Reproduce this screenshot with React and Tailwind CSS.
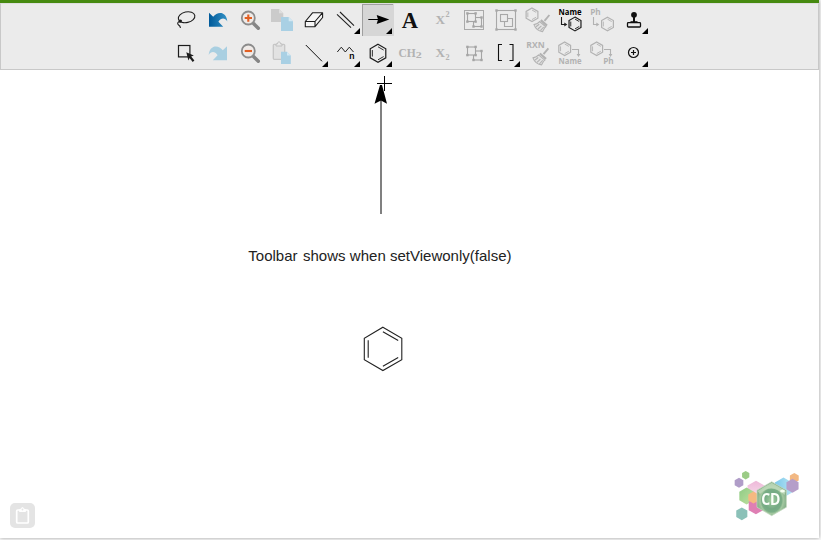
import React from "react";

const SANS = "'Open Sans', 'Noto Sans', sans-serif";
const SERIF = "'Liberation Serif', serif";
const GREY = "#b2b2b2";
const INK = "#1c1c1c";

function hexPoints(cx, cy, r) {
  const w = r * 0.866;
  return [
    [cx, cy - r],
    [cx + w, cy - r / 2],
    [cx + w, cy + r / 2],
    [cx, cy + r],
    [cx - w, cy + r / 2],
    [cx - w, cy - r / 2],
  ]
    .map((p) => p.join(","))
    .join(" ");
}

function Ring({ cx, cy, r, gap = 2, color, sw = 1.2 }) {
  const i = r - gap;
  const w = i * 0.866;
  return (
    <g fill="none" stroke={color} strokeWidth={sw}>
      <polygon points={hexPoints(cx, cy, r)} />
      <path
        d={`M${cx} ${cy - i}L${cx + w} ${cy - i / 2}M${cx} ${cy + i}L${cx + w} ${cy + i / 2}M${cx - w} ${cy - i / 2}V${cy + i / 2}`}
        strokeWidth={sw * 0.75}
      />
    </g>
  );
}

function Corner() {
  return <polygon points="30,24 30,30 24,30" fill="#000" />;
}

function Lens({ minus }) {
  return (
    <g>
      <path d="M19.5 19.5L24.3 24.3" stroke="#858585" strokeWidth="3.4" strokeLinecap="round" />
      <circle cx="14.3" cy="14" r="6.5" fill="#f0ebe8" stroke="#8c8c8c" strokeWidth="1.8" />
      <path d={minus ? "M10.7 14H18" : "M10.7 14H18M14.3 10.4V17.7"} stroke="#e25f22" strokeWidth="2.1" />
    </g>
  );
}

function Broom({ y = 0 }) {
  return (
    <g transform={`translate(0 ${y})`} stroke={GREY} fill="none" strokeWidth="1.1">
      <path d="M27.4 11L22.5 16.8" strokeWidth="1.9" />
      <path d="M18.8 16.2L25 21.6" strokeWidth="2.2" />
      <path d="M17.6 17.6C16 19.5 14.5 20 12 20.6C13.2 24 16.5 27 20.5 27.6C21.6 26 22 24 23.8 22.8Z" fill="#e4e4e4" />
      <path d="M14 22.8L17.2 20.2M16 25L19.4 21.8M18.4 26.7L21.7 23" />
    </g>
  );
}

function Label({ x, y, w, children, color = GREY, size = 8 }) {
  return (
    <text x={x} y={y} fontFamily={SANS} fontWeight="700" fontSize={size} fill={color} textLength={w} lengthAdjust="spacingAndGlyphs">
      {children}
    </text>
  );
}

function Overlap({ y = 0 }) {
  return (
    <g transform={`translate(0 ${y})`} fill="none" stroke="#a5a5a5" strokeWidth="1.1">
      <rect x="15.5" y="13.5" width="8" height="9" />
      <rect x="9.5" y="9.5" width="8" height="8" fill="#ebebeb" />
      <g fill="#a5a5a5" stroke="none">
        <rect x="8.2" y="8.2" width="2.4" height="2.4" />
        <rect x="16.4" y="8.2" width="2.4" height="2.4" />
        <rect x="8.2" y="16.4" width="2.4" height="2.4" />
        <rect x="16.4" y="16.4" width="2.4" height="2.4" />
        <rect x="22.3" y="12.3" width="2.4" height="2.4" />
        <rect x="22.3" y="21.3" width="2.4" height="2.4" />
        <rect x="14.3" y="21.3" width="2.4" height="2.4" />
      </g>
    </g>
  );
}

function Script({ y }) {
  return (
    <g fontFamily={SERIF} fontWeight="700" fill={GREY}>
      <text x="9.5" y="20" fontSize="13.3">X</text>
      <text x="19.5" y={y} fontSize="8.2">2</text>
    </g>
  );
}

function DownArrow({ x, y, color }) {
  return (
    <g>
      <path d={`M${x} ${y}V${y + 7.5}H${x + 3.5}`} fill="none" stroke={color} strokeWidth="1.1" />
      <polygon points={`${x + 2.8},${y + 5.5} ${x + 5.8},${y + 7.5} ${x + 2.8},${y + 9.5}`} fill={color} />
    </g>
  );
}

function TurnArrow({ x, color }) {
  return (
    <g>
      <path d={`M${x} 12.5H${x + 6.5}V18`} fill="none" stroke={color} strokeWidth="1.1" />
      <polygon points={`${x + 4.6},17 ${x + 8.4},17 ${x + 6.5},20`} fill={color} />
    </g>
  );
}

const topRow = [
  {
    name: "Lasso",
    art: (
      <g fill="none" stroke={INK} strokeWidth="1.1">
        <ellipse cx="16.6" cy="13.2" rx="8.4" ry="5.3" transform="rotate(-13 16.6 13.2)" />
        <path d="M11.5 16.3C9 18 8 17.5 7.7 19.2C7.3 21.5 9.8 20.3 10.5 23.8" />
        <circle cx="10.2" cy="17.2" r="1.1" fill={INK} />
      </g>
    ),
  },
  {
    name: "Undo",
    art: (
      <g>
        <defs>
          <linearGradient id="undo">
            <stop offset="0" stopColor="#005a9a" />
            <stop offset="1" stopColor="#3392c6" />
          </linearGradient>
        </defs>
        <path d="M7 8.7L11.2 12.8C15.5 6.8 24.5 7.2 25.3 17.4C22.8 13.4 19 13.6 16.4 17.8L21.2 22.7H7Z" fill="url(#undo)" />
      </g>
    ),
  },
  { name: "Zoom in", art: <Lens /> },
  {
    name: "Copy",
    art: (
      <g>
        <path d="M5 5H13L17.3 9.3V18H5Z" fill="#cbcbcb" />
        <path d="M13 5V9.3H17.3Z" fill="#dedede" />
        <path d="M15 13H22.7L27 17.3V27H15Z" fill="#a9d0e4" />
        <path d="M22.7 13V17.3H27Z" fill="#d2e8f3" />
      </g>
    ),
  },
  {
    name: "Eraser",
    art: <path d="M7.3 17.5L14.7 8.7H24.6V13.5L17 22.7H7.3ZM7.3 17.5H17V22.7M17 17.5L24.6 8.7" fill="#f6f6f6" stroke={INK} strokeWidth="1.1" strokeLinejoin="round" />,
  },
  { name: "Double bond", menu: true, art: <path d="M7 10.3L21 23.7M10 8L24 21.7" stroke="#222" strokeWidth="1.1" /> },
  {
    name: "Arrow",
    menu: true,
    active: true,
    art: (
      <g>
        <path d="M6.3 15.5H17" stroke="#000" strokeWidth="1" />
        <path d="M14.7 10.9L27.3 15.5L14.7 20.1L16 15.5Z" fill="#000" />
      </g>
    ),
  },
  { name: "Text", art: <text x="7.7" y="23.8" fontFamily={SERIF} fontWeight="700" fontSize="22.5" fill="#111">A</text> },
  { name: "Superscript", art: <Script y="13" /> },
  {
    name: "Group",
    art: (
      <g>
        <rect x="6.5" y="6.5" width="19" height="19" fill="none" stroke="#aaa" />
        <Overlap />
      </g>
    ),
  },
  {
    name: "Frame",
    art: (
      <g fill="none" stroke="#a8a8a8" strokeWidth="1.1">
        <rect x="6.5" y="6.5" width="19" height="19" />
        <path d="M14.5 14.5H22.5V22.5H14.5Z" />
        <rect x="10.5" y="10.5" width="7" height="7" fill="#ebebeb" />
        <g fill="#a8a8a8" stroke="none">
          <rect x="5.3" y="5.3" width="2.4" height="2.4" />
          <rect x="24.3" y="5.3" width="2.4" height="2.4" />
          <rect x="5.3" y="24.3" width="2.4" height="2.4" />
          <rect x="24.3" y="24.3" width="2.4" height="2.4" />
        </g>
      </g>
    ),
  },
  {
    name: "Clean structure",
    art: (
      <g>
        <Ring cx={10} cy={10.8} r={6.8} color={GREY} />
        <Broom />
      </g>
    ),
  },
  {
    name: "Name to structure",
    art: (
      <g>
        <Label x={4.6} y={11.2} w={23} color="#000">Name</Label>
        <DownArrow x={7.5} y={13} color={INK} />
        <Ring cx={21} cy={20} r={6.9} color={INK} />
      </g>
    ),
  },
  {
    name: "Ph to structure",
    art: (
      <g>
        <Label x={4.2} y={11.2} w={10.5}>Ph</Label>
        <DownArrow x={7.5} y={13} color={GREY} />
        <Ring cx={21.5} cy={20} r={6.8} color={GREY} />
      </g>
    ),
  },
  {
    name: "Stamp",
    menu: true,
    art: (
      <g>
        <circle cx="16" cy="10.8" r="2.9" fill="#111" />
        <path d="M16 12V18" stroke="#111" strokeWidth="2" />
        <path d="M12.5 17.8H19.5" stroke="#111" strokeWidth="1.2" />
        <rect x="9.5" y="18.6" width="13" height="4.4" rx="0.8" fill="none" stroke="#111" strokeWidth="1.3" />
      </g>
    ),
  },
];

const bottomRow = [
  {
    name: "Select",
    art: (
      <g>
        <rect x="8.5" y="8.5" width="11.4" height="11.4" fill="none" stroke={INK} strokeWidth="1.2" />
        <path d="M16.3 15.2L23.8 18.5L21.2 19.5L24.4 23.5L22.7 25L19.6 21L18.4 23.4Z" fill={INK} />
      </g>
    ),
  },
  { name: "Redo", art: <path d="M25 9.2L20.8 13.3C16.5 7.3 7.5 7.7 6.7 17.9C9.2 13.9 13 14.1 15.6 18.3L10.8 23.2H25Z" fill="#a9cfe1" /> },
  { name: "Zoom out", art: <Lens minus /> },
  {
    name: "Paste",
    art: (
      <g>
        <rect x="7.3" y="7.3" width="11.4" height="15" rx="1" fill="#e2e2e2" stroke="#c6c6c6" strokeWidth="1.3" />
        <path d="M10 9V7H11.3C11.3 4.2 14.7 4.2 14.7 7H16V9Z" fill="#e8e8e8" stroke="#c0c0c0" />
        <path d="M15 14.8H21L24.8 18.6V27H15Z" fill="#a9d0e4" />
        <path d="M21 14.8V18.6H24.8Z" fill="#d2e8f3" />
      </g>
    ),
  },
  { name: "Single bond", menu: true, art: <path d="M7.8 8L24 24.3" stroke="#111" strokeWidth="1" /> },
  {
    name: "Chain",
    menu: true,
    art: (
      <g>
        <path d="M7.3 15L11.3 10.2L15.3 15L19.3 10.2L23.5 15" fill="none" stroke="#222" />
        <text x="19.3" y="22" fontFamily="Roboto, sans-serif" fontSize="9.5" fontWeight="500" fill="#000">n</text>
      </g>
    ),
  },
  { name: "Benzene ring", menu: true, art: <Ring cx={16} cy={16.3} r={9} gap={2.5} color={INK} sw={1.2} /> },
  {
    name: "Formula",
    art: (
      <g fontFamily={SERIF} fontWeight="700" fill={GREY}>
        <text x="4.4" y="20.2" fontSize="11.8" textLength="17.3" lengthAdjust="spacingAndGlyphs">CH</text>
        <text x="21.8" y="21" fontSize="8.6" textLength="6" lengthAdjust="spacingAndGlyphs">2</text>
      </g>
    ),
  },
  { name: "Subscript", art: <Script y="22.8" /> },
  { name: "Ungroup", art: <Overlap y={0.5} /> },
  { name: "Brackets", menu: true, art: <path d="M12 7.5H8.5V23.5H12M19.5 7.5H23V23.5H19.5" fill="none" stroke="#111" strokeWidth="1.1" /> },
  {
    name: "Clean reaction",
    art: (
      <g>
        <Label x={4.3} y={11} w={18.4}>RXN</Label>
        <g transform="translate(-1 0)"><Broom y={0.3} /></g>
      </g>
    ),
  },
  {
    name: "Structure to name",
    art: (
      <g>
        <Ring cx={10.7} cy={11.8} r={6.8} color={GREY} />
        <TurnArrow x={18} color={GREY} />
        <Label x={4.6} y={26.8} w={23}>Name</Label>
      </g>
    ),
  },
  {
    name: "Structure to Ph",
    art: (
      <g>
        <Ring cx={10.7} cy={11.8} r={6.8} color={GREY} />
        <TurnArrow x={18} color={GREY} />
        <Label x={17.2} y={26.8} w={10.5}>Ph</Label>
      </g>
    ),
  },
  {
    name: "Charge",
    menu: true,
    art: (
      <g fill="none" stroke="#111" strokeWidth="1.2">
        <circle cx="15.5" cy="15.5" r="5" />
        <path d="M13 15.5H18M15.5 13V18" />
      </g>
    ),
  },
];

function Tool({ tool }) {
  return (
    <button
      aria-label={tool.name}
      className={tool.active ? "h-8 w-8 shrink-0 bg-[linear-gradient(#a0a0a0,#a0a0a0),linear-gradient(#a0a0a0,#a0a0a0)] bg-[length:1px_100%,31px_1px] bg-no-repeat bg-[#d6d6d6]" : "h-8 w-8 shrink-0"}
    >
      <svg width="32" height="32" viewBox="0 0 32 32" className="block">
        {tool.art}
        {tool.menu && <Corner />}
      </svg>
    </button>
  );
}

function Toolbar() {
  return (
    <div className="flex h-[67px] flex-col gap-px border-x border-b border-[#c8c8c8] border-t border-t-[#dedede] bg-[#ebebeb] pl-[169px]">
      <div className="flex h-8 shrink-0">
        {topRow.map((t) => <Tool key={t.name} tool={t} />)}
      </div>
      <div className="flex h-8 shrink-0">
        {bottomRow.map((t) => <Tool key={t.name} tool={t} />)}
      </div>
    </div>
  );
}

function Sketch() {
  return (
    <svg width="819" height="468" viewBox="0 70 819 468" className="block">
      <rect x="380" y="100" width="2" height="114" fill="#808080" />
      <path d="M380 85H382L387 103.7L381 100.5L374.5 103.7Z" fill="#000" />
      <path d="M377 83.5H392M384.5 76V91" stroke="#000" strokeWidth="1" />
      <g fontFamily="'Liberation Sans', Arial, sans-serif" fontSize="15" fill="#222">
        <text x="248.3" y="261" textLength="49.2">Toolbar</text>
        <text x="303" y="261" textLength="42.5">shows</text>
        <text x="349.8" y="261" textLength="36">when</text>
        <text x="390" y="261" textLength="121.5">setViewonly(false)</text>
      </g>
      <g fill="none" stroke="#222" strokeWidth="1.1">
        <polygon points="382.9,327.2 401.8,338.2 401.8,359.8 382.9,370.6 364.3,359.8 364.3,338.2" />
        <path d="M382.9 331.7L398.2 340.4M382.9 366.3L398.2 357.6M368.2 340.2V357.8" />
      </g>
    </svg>
  );
}

function Logo() {
  return (
    <svg width="72" height="60" viewBox="0 0 72 60" className="block">
      <defs>
        <radialGradient id="badge" cx="0.5" cy="0.55">
          <stop offset="0" stopColor="#a5cfa0" />
          <stop offset="0.5" stopColor="#74aa84" />
          <stop offset="0.68" stopColor="#7aae86" />
          <stop offset="0.78" stopColor="#a3c8a0" />
          <stop offset="1" stopColor="#86b08a" />
        </radialGradient>
        <linearGradient id="blue">
          <stop offset="0" stopColor="#7cc8ea" />
          <stop offset="1" stopColor="#b4e3f4" />
        </linearGradient>
        <linearGradient id="pink" x2="0" y2="1">
          <stop offset="0" stopColor="#eeb8d9" />
          <stop offset="1" stopColor="#f8e4ee" />
        </linearGradient>
        <linearGradient id="lime" x2="1" y2="1">
          <stop offset="0" stopColor="#8fcb84" />
          <stop offset="1" stopColor="#c0e0a0" />
        </linearGradient>
        <filter id="soft"><feGaussianBlur stdDeviation="0.75" /></filter>
        <filter id="softText"><feGaussianBlur stdDeviation="0.35" /></filter>
      </defs>
      <g filter="url(#soft)">
        <polygon points={hexPoints(15.7, 5.2, 4.2)} fill="#9bcb86" />
        <polygon points={hexPoints(9, 12.8, 5)} fill="#b09dc8" />
        <polygon points={hexPoints(11.8, 43.8, 6.4)} fill="#8bc1b8" />
        <polygon points={hexPoints(26, 20.5, 9.8)} fill="url(#pink)" />
        <polygon points={hexPoints(53.5, 17.5, 10)} fill="url(#blue)" />
        <polygon points={hexPoints(64.3, 8, 5.1)} fill="#f2b883" />
        <polygon points={hexPoints(62.5, 15.8, 7)} fill="#b59ec9" />
        <polygon points={hexPoints(16.6, 26, 8.4)} fill="url(#lime)" />
        <polygon points={hexPoints(25.9, 36, 8.3)} fill="#df7fb4" />
        <polygon points={hexPoints(23.5, 27.6, 6)} fill="#f5b981" />
        <polygon points={hexPoints(41.7, 28.7, 17)} fill="url(#badge)" stroke="#c5dac1" strokeWidth="0.7" />
        <path d="M27.5 21L41.7 12.7L55.8 21L54.5 25C46 17 38 16 30 24Z" fill="#c6dec0" opacity="0.7" />
        <ellipse cx="52.5" cy="21" rx="2.4" ry="1.6" fill="#f5fff1" />
      </g>
      <text x="31.2" y="35" filter="url(#softText)" fontFamily={SANS} fontWeight="700" fontSize="16.5" fill="#fbfffa" textLength="19.3" lengthAdjust="spacingAndGlyphs">CD</text>
    </svg>
  );
}

export default function App() {
  return (
    <div className="h-[540px] w-[821px] overflow-hidden bg-[#fafafa]">
      <main className="relative h-[538px] w-[819px] bg-white shadow-[0_0_4px_rgba(0,0,0,0.38)]">
        <div className="h-[3px] bg-[#468a10]" />
        <Toolbar />
        <Sketch />
        <button aria-label="Clipboard" className="absolute bottom-[10px] left-[10px] h-[25px] w-[25px] rounded-[5px] bg-[#e4e4e4]">
          <svg width="25" height="25" viewBox="0 0 25 25" fill="none" stroke="#fff" strokeWidth="1.7" className="block">
            <rect x="6.7" y="7" width="11.6" height="13" rx="1" />
            <path d="M9.5 8.5V6.6H11C11 3.9 14 3.9 14 6.6H15.5V8.5Z" fill="#fff" strokeWidth="1" />
            <circle cx="12.5" cy="6.5" r="0.9" fill="#e4e4e4" stroke="none" />
          </svg>
        </button>
        <div className="absolute left-[730px] top-[470px]">
          <Logo />
        </div>
      </main>
    </div>
  );
}
